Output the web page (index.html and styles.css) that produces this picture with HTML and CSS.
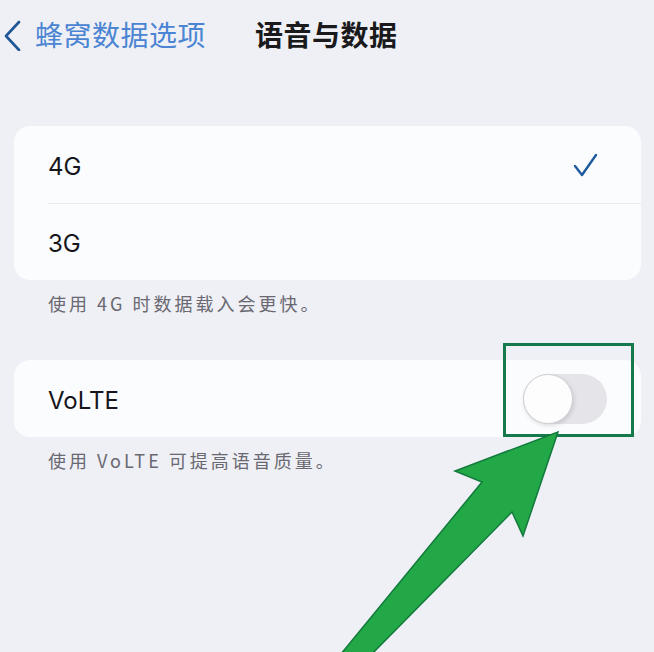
FILE: index.html
```html
<!DOCTYPE html>
<html lang="zh-CN">
<head>
  <meta charset="UTF-8">
  <meta name="viewport" content="width=device-width, initial-scale=1.0">
  <title>语音与数据</title>
  <link rel="stylesheet" href="styles.css">
</head>
<body>
  <header class="nav">
    <a class="nav-back" href="#">
      <svg class="chevron" width="18" height="32" viewBox="0 0 18 32">
        <path d="M15 3 L2 17 L15 31" fill="none" stroke="#1f5696" stroke-width="2.6" stroke-linecap="round" stroke-linejoin="round"/>
      </svg>
      <span>蜂窝数据选项</span>
    </a>
    <h1 class="nav-title">语音与数据</h1>
  </header>

  <div class="group">
    <div class="row">
      <span class="label">4G</span>
      <svg class="check" width="26" height="26" viewBox="0 0 26 26">
        <path d="M2 14 L9 23 L23 3" fill="none" stroke="#1f5a9e" stroke-width="2.4" stroke-linecap="round" stroke-linejoin="round"/>
      </svg>
    </div>
    <div class="row">
      <span class="label">3G</span>
    </div>
  </div>
  <p class="note">使用 4G 时数据载入会更快。</p>

  <div class="group group-volte">
    <div class="row">
      <span class="label">VoLTE</span>
      <span class="toggle"><span class="knob"></span></span>
    </div>
  </div>
  <p class="note">使用 VoLTE 可提高语音质量。</p>

  <!-- annotation: frame around the switch and the arrow pointing at it -->
  <div class="mark-box"></div>
  <svg class="mark-arrow" width="654" height="652" viewBox="0 0 654 652">
    <polygon points="558,432 523,536 512,512 366,660 336,660 482,482 455,471" fill="#22a846" stroke="#127a3c" stroke-width="1.5" stroke-linejoin="miter"/>
  </svg>
</body>
</html>
```

FILE: styles.css
```css
* {
  box-sizing: border-box;
}
body {
  margin: 0;
  background: #eef0f6;
  color: #111;
  font-family: Inter, "Noto Sans", "Noto Sans CJK SC", sans-serif;
  position: relative;
  height: 652px;
  overflow: hidden;
}
.nav {
  display: flex;
  align-items: center;
  height: 68px;
  padding-left: 4px;
}
.nav-back {
  display: flex;
  align-items: center;
  gap: 13px;
  color: #4a84d2;
  text-decoration: none;
  font-family: "Noto Sans CJK SC", sans-serif;
  font-size: 28px;
  letter-spacing: 0.5px;
}
.chevron {
  margin-top: 2px;
}
.nav-title {
  margin: 0 0 0 49px;
  font-family: "Noto Sans CJK SC", sans-serif;
  font-size: 28px;
  font-weight: 700;
  color: #1a1a1c;
  letter-spacing: 0.5px;
}
.group {
  margin: 58px 13px 0 14px;
  background: #fbfcfe;
  border-radius: 16px;
  overflow: hidden;
}
.group-volte {
  margin-top: 44px;
}
.row {
  display: flex;
  align-items: center;
  justify-content: space-between;
  height: 77px;
  padding: 0 34px 0 34px;
  position: relative;
}
.row + .row::before {
  content: "";
  position: absolute;
  top: 0;
  left: 34px;
  right: 0;
  height: 1px;
  background: #e9ebf0;
}
.label {
  font-size: 24px;
  color: #16161a;
  margin-top: 3px;
}
.check {
  margin-right: 8px;
}
.toggle {
  width: 84px;
  height: 50px;
  border-radius: 25px;
  background: #e4e4e9;
  position: relative;
}
.knob {
  position: absolute;
  left: 0;
  top: 0;
  width: 50px;
  height: 50px;
  border-radius: 50%;
  background: #fdfdfe;
  border: 1px solid #cfcfd4;
  box-shadow: 1px 2px 4px rgba(0, 0, 0, 0.12);
}
.note {
  margin: 10px 0 0 48px;
  font-family: "Noto Sans CJK SC", sans-serif;
  font-size: 18px;
  color: #6a6870;
  letter-spacing: 3px;
  line-height: 26px;
}
.mark-box {
  position: absolute;
  left: 503px;
  top: 343px;
  width: 131px;
  height: 94px;
  border: 3px solid #147a4c;
}
.mark-arrow {
  position: absolute;
  left: 0;
  top: 0;
  pointer-events: none;
}
```
